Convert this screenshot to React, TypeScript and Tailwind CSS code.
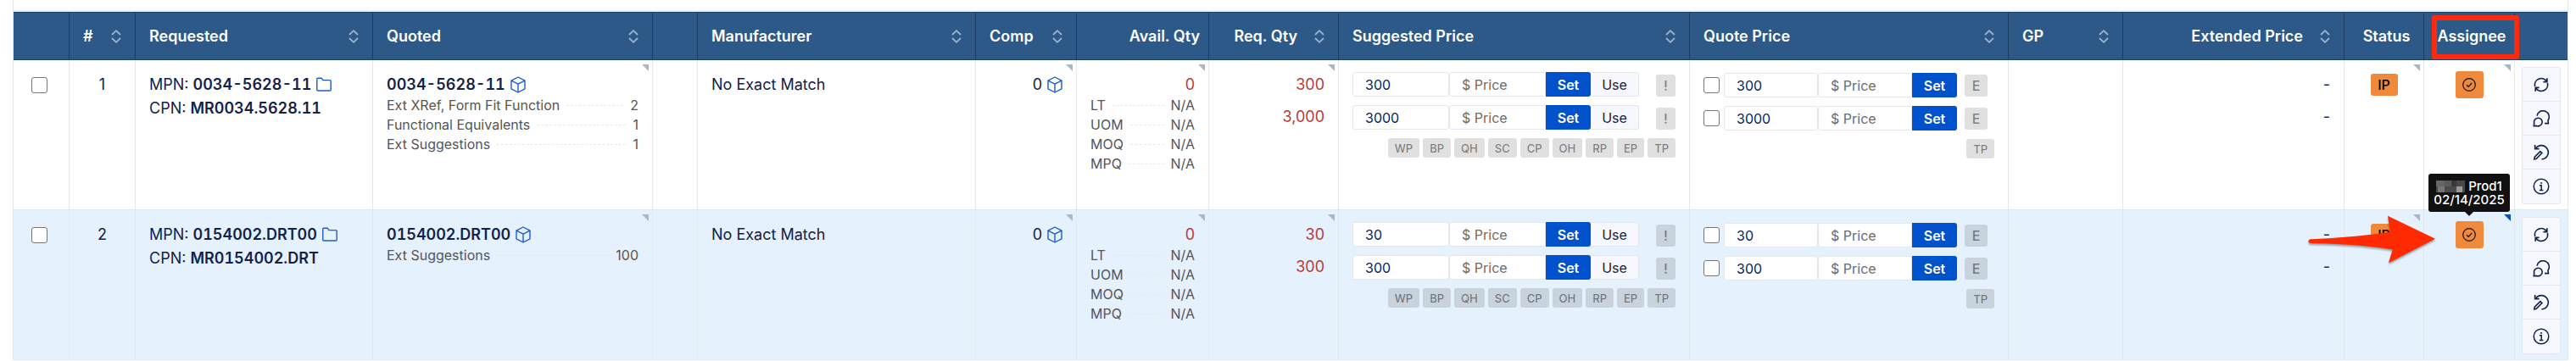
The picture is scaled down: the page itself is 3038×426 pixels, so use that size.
import React from 'react';
import clsx from 'clsx';

type Note = { label: string; value: string };

interface QuoteLine {
  id: number;
  mpn: string;
  cpn: string;
  matches: Note[];
  quantities: { value: string; label: string }[];
  hovered: boolean;
}

const lines: QuoteLine[] = [
  {
    id: 1,
    mpn: '0034-5628-11',
    cpn: 'MR0034.5628.11',
    matches: [
      { label: 'Ext XRef, Form Fit Function', value: '2' },
      { label: 'Functional Equivalents', value: '1' },
      { label: 'Ext Suggestions', value: '1' },
    ],
    quantities: [
      { value: '300', label: '300' },
      { value: '3000', label: '3,000' },
    ],
    hovered: false,
  },
  {
    id: 2,
    mpn: '0154002.DRT00',
    cpn: 'MR0154002.DRT',
    matches: [{ label: 'Ext Suggestions', value: '100' }],
    quantities: [
      { value: '30', label: '30' },
      { value: '300', label: '300' },
    ],
    hovered: true,
  },
];

const availability: Note[] = [
  { label: 'LT', value: 'N/A' },
  { label: 'UOM', value: 'N/A' },
  { label: 'MOQ', value: 'N/A' },
  { label: 'MPQ', value: 'N/A' },
];

const sources = ['WP', 'BP', 'QH', 'SC', 'CP', 'OH', 'RP', 'EP', 'TP'];

const SortIcon = () => (
  <svg viewBox="0 0 12 16" className="h-4 w-3 shrink-0" fill="none" stroke="#9db3ca" strokeWidth="1.8">
    <path d="M1 6l5-4.8L11 6M1 10l5 4.8L11 10" />
  </svg>
);

const FolderIcon = () => (
  <svg viewBox="0 0 18 18" className="size-[18px]" fill="none" stroke="#1d5bd0" strokeWidth="1.4" strokeLinejoin="round">
    <path d="M.8 2.2Q.8 1.2 1.8 1.2H6.2L8 3.6h8.2q1 0 1 1V15q0 1-1 1H1.8q-1 0-1-1z" />
  </svg>
);

const CubeIcon = () => (
  <svg viewBox="0 0 18 20" className="h-5 w-[18px]" fill="none" stroke="#1d5bd0" strokeWidth="1.4" strokeLinejoin="round">
    <path d="M9 1l8 4.2v9.6L9 19l-8-4.2V5.2z" />
    <path d="M1 5.2l8 4 8-4M9 9.2V19" />
  </svg>
);

const RefreshIcon = () => (
  <svg viewBox="0 0 20 20" className="size-5" fill="none" stroke="#12224a" strokeWidth="1.7">
    <path d="M2.6 12A7.6 7.6 0 0 1 16.2 5.8M17.4 8A7.6 7.6 0 0 1 3.8 14.2" />
    <path d="M16.8 2.2v4.4h-4.4M3.2 17.8v-4.4h4.4" />
  </svg>
);

const ChatIcon = () => (
  <svg viewBox="0 0 20 20" className="size-5" fill="none" stroke="#12224a" strokeWidth="1.6">
    <path d="M5 6.6A7.2 7.2 0 1 1 18 12l.4 3.6H14" />
    <path d="M1.3 18.7l.4-3.4A4.8 4.8 0 1 1 4.4 18.4z" />
  </svg>
);

const EditHistoryIcon = () => (
  <svg viewBox="0 0 20 20" className="size-5" fill="none" stroke="#12224a" strokeWidth="1.6">
    <path d="M3.6 4.8A8.2 8.2 0 1 1 10.4 18" />
    <path d="M2.6 1v4.6h5" />
    <path d="M1.8 18l.5-2.8 6.6-6.6 2 2-6.6 6.7z" />
  </svg>
);

const InfoIcon = () => (
  <svg viewBox="0 0 20 20" className="size-5" fill="none" stroke="#12224a" strokeWidth="1.5">
    <circle cx="10" cy="10" r="8.8" />
    <path d="M8 8.8h2.2v5.6M7.8 14.4h4.6" />
    <circle cx="10" cy="6" r="1" fill="#12224a" stroke="none" />
  </svg>
);

const actions = [
  { name: 'Refresh', Icon: RefreshIcon },
  { name: 'Comments', Icon: ChatIcon },
  { name: 'Edit history', Icon: EditHistoryIcon },
  { name: 'Info', Icon: InfoIcon },
];

const Corner = ({ active = false }: { active?: boolean }) => (
  <svg viewBox="0 0 8 8" className="absolute top-[5px] right-1 size-2">
    <path d="M0 0h8v8z" fill={active ? '#0052cc' : '#a9b8c6'} />
  </svg>
);

interface HeadProps {
  children?: React.ReactNode;
  sort?: boolean;
  className?: string;
}

const Head = ({ children, sort, className }: HeadProps) => (
  <th
    scope="col"
    className="relative h-[57px] border-y border-r border-[#1c3d66] bg-[#2d5989] p-0 text-lg font-semibold text-white last:border-r-0"
  >
    <div className={clsx('flex items-center pl-4', sort ? 'pr-4' : 'pr-[10px]', className)}>
      {children}
      {sort && <SortIcon />}
    </div>
  </th>
);

const Cell = ({ children, className }: { children?: React.ReactNode; className?: string }) => (
  <td className={clsx('relative border-r border-b border-[#e3e8ee] px-4 pt-[15px] pb-0 align-top last:border-r-0', className)}>
    {children}
  </td>
);

const NoteList = ({ items }: { items: Note[] }) => (
  <ul className="-mt-px text-base leading-[23px] text-[#555]">
    {items.map((item) => (
      <li key={item.label} className="flex items-center gap-2">
        <span>{item.label}</span>
        <span className="flex-1 border-t border-dashed border-[#e6e9ec]" />
        <span>{item.value}</span>
      </li>
    ))}
  </ul>
);

const Tag = ({ children, className }: { children: React.ReactNode; className?: string }) => (
  <span
    className={clsx(
      'flex shrink-0 items-center justify-center rounded-[3px] bg-black/12 font-medium text-black/45',
      className
    )}
  >
    {children}
  </span>
);

const partNumber = 'font-semibold tabular-nums';
const field =
  'h-[29px] w-0 min-w-0 flex-1 rounded-[3px] border border-[#e3e8ee] bg-white px-[14px] text-base text-[#12224a] placeholder:text-[#6b6b6b] outline-none';
const setButton = 'h-[29px] w-[53px] shrink-0 rounded-r-[3px] bg-[#0052cc] text-base font-semibold text-white';
const tick = 'size-[19px] shrink-0 appearance-none rounded-[3px] border border-[#767676] bg-white';

const SuggestedPrice = ({ line }: { line: QuoteLine }) => (
  <div className="-mt-px flex flex-col gap-[10px]">
    {line.quantities.map((qty) => (
      <div key={qty.value} className="flex items-end gap-5">
        <div className="flex min-w-0 flex-1">
          <input aria-label="Suggested quantity" defaultValue={qty.value} className={field} />
          <input aria-label="Suggested price" placeholder="$ Price" className={field} />
          <button className={setButton}>Set</button>
          <button className="h-[29px] w-[57px] shrink-0 rounded-r-[3px] border border-l-0 border-[#e3e8ee] bg-[#f6f8fe] text-base text-[#12224a]">
            Use
          </button>
        </div>
        <Tag className="h-[26px] w-[23px] text-base">!</Tag>
      </div>
    ))}
    <div className="flex justify-end gap-1">
      {sources.map((source) => (
        <Tag key={source} className="h-[23px] px-2 text-[13px]">
          {source}
        </Tag>
      ))}
    </div>
  </div>
);

const QuotePrice = ({ line }: { line: QuoteLine }) => (
  <div className="flex flex-col gap-[10px]">
    {line.quantities.map((qty) => (
      <div key={qty.value} className="flex items-center pr-2">
        <input type="checkbox" aria-label={`Quote quantity ${qty.label}`} className={tick} />
        <div className="ml-[5px] flex min-w-0 flex-1">
          <input aria-label="Quote quantity" defaultValue={qty.value} className={field} />
          <input aria-label="Quote price" placeholder="$ Price" className={field} />
          <button className={setButton}>Set</button>
        </div>
        <Tag className="ml-[9px] h-[26px] w-[27px] text-base">E</Tag>
      </div>
    ))}
    <div className="flex justify-end">
      <Tag className="h-[23px] px-2 text-[13px]">TP</Tag>
    </div>
  </div>
);

// Redacted first name in the tooltip
const MaskedName = () => (
  <svg viewBox="0 0 34 14" className="h-[14px] w-[34px]">
    <rect width="34" height="14" fill="#4a4a4a" />
    <rect width="10" height="7" fill="#666" />
    <rect x="10" width="8" height="7" fill="#5a5a5a" />
    <rect x="24" y="7" width="7" height="7" fill="#9a9a9a" />
    <rect x="2" y="7" width="8" height="7" fill="#757575" />
    <rect x="18" y="0" width="6" height="7" fill="#3a3a3a" />
  </svg>
);

const AssigneeTooltip = () => (
  <div
    role="tooltip"
    className="absolute bottom-[174px] left-1/2 z-20 flex h-[45px] w-24 -translate-x-1/2 flex-col items-center justify-center rounded-[3px] bg-[#111] text-[15px] leading-4 font-medium text-white"
  >
    <span className="flex items-center gap-1">
      <MaskedName />
      Prod1
    </span>
    <span>02/14/2025</span>
    <svg viewBox="0 0 10 5" className="absolute top-full h-[5px] w-[10px]">
      <path d="M0 0h10L5 5z" fill="#111" />
    </svg>
  </div>
);

const PointerArrow = () => (
  <svg
    viewBox="0 0 152 60"
    className="absolute top-[6px] -left-[43px] z-20 h-[60px] w-[152px] overflow-visible drop-shadow-[0_2px_1px_rgba(0,0,0,0.35)]"
  >
    <path
      d="M3 28.3Q60 26 96.7 19.4L94 .7 150 27.7 95 56.3l4.7-15.8Q60 34 3 33Q.3 32.6.3 30.7T3 28.3z"
      fill="#ff2a00"
    />
  </svg>
);

const Row = ({ line }: { line: QuoteLine }) => (
  <tr className={clsx('h-[177px] leading-7', line.hovered ? 'bg-[#e5f1fd]' : 'bg-white')}>
    <Cell>
      <input type="checkbox" aria-label={`Select line ${line.id}`} className={clsx(tick, 'mt-[5px] ml-[5px] block')} />
    </Cell>
    <Cell className="text-center">{line.id}</Cell>
    <Cell>
      <div className="flex items-center gap-[6px]">
        <span>
          MPN: <b className={partNumber}>{line.mpn}</b>
        </span>
        <FolderIcon />
      </div>
      <div>
        CPN: <b className={partNumber}>{line.cpn}</b>
      </div>
    </Cell>
    <Cell>
      <div className="flex items-center gap-[6px]">
        <b className={partNumber}>{line.mpn}</b>
        <CubeIcon />
      </div>
      <NoteList items={line.matches} />
      <Corner />
    </Cell>
    <Cell />
    <Cell>No Exact Match</Cell>
    <Cell>
      <div className="flex items-center justify-end gap-[6px]">
        0 <CubeIcon />
      </div>
      <Corner />
    </Cell>
    <Cell>
      <div className="text-right text-[#b73b3b]">0</div>
      <NoteList items={availability} />
      <Corner />
    </Cell>
    <Cell className="text-right text-[#b73b3b]">
      <div className="flex flex-col gap-[10px]">
        {line.quantities.map((qty) => (
          <span key={qty.label}>{qty.label}</span>
        ))}
      </div>
      <Corner />
    </Cell>
    <Cell>
      <SuggestedPrice line={line} />
    </Cell>
    <Cell>
      <QuotePrice line={line} />
    </Cell>
    <Cell />
    <Cell className="text-right">
      <div className="flex flex-col gap-[10px]">
        {line.quantities.map((qty) => (
          <span key={qty.label}>-</span>
        ))}
      </div>
    </Cell>
    <Cell>
      <span className="mx-auto mt-px flex h-[26px] w-8 items-center justify-center rounded-[3px] bg-[#ef8a3d] text-base font-medium text-black">
        IP
      </span>
      <Corner />
      {line.hovered && <PointerArrow />}
    </Cell>
    <Cell>
      <button
        aria-label="Assignee"
        className="mx-auto -mt-[2px] flex h-8 w-[33px] items-center justify-center rounded-[3px] bg-[#ef8a3d]"
      >
        <svg viewBox="0 0 16 16" className="size-4" fill="none" stroke="#111" strokeWidth="1.2">
          <circle cx="8" cy="8" r="7.3" />
          <path d="M5 8.2l2.2 2.1L11.2 6" />
        </svg>
      </button>
      <Corner active={line.hovered} />
      {line.hovered && <AssigneeTooltip />}
    </Cell>
    <td className="border-b border-[#e3e8ee] px-2 pt-2 align-top">
      <div className="flex flex-col divide-y divide-[#e3e8ee] rounded-[3px] border border-[#e3e8ee] bg-[#f6f8fe]">
        {actions.map(({ name, Icon }) => (
          <button key={name} aria-label={name} className="flex h-10 items-center justify-center">
            <Icon />
          </button>
        ))}
      </div>
    </td>
  </tr>
);

const App: React.FC = () => {
  return (
    <main className="bg-white font-[Inter,sans-serif] text-lg text-[#12224a]">
      <div className="mr-[9px] ml-[15px] border-x border-[#e3e8ee] pt-3">
        <div className="border-t-2 border-[#e6edf5]">
          <table className="w-full table-fixed border-separate border-spacing-0">
            <colgroup>
              <col className="w-[66px]" />
              <col className="w-[78px]" />
              <col className="w-[280px]" />
              <col className="w-[330px]" />
              <col className="w-[53px]" />
              <col className="w-[328px]" />
              <col className="w-[119px]" />
              <col className="w-[156px]" />
              <col className="w-[153px]" />
              <col className="w-[414px]" />
              <col className="w-[376px]" />
              <col className="w-[135px]" />
              <col className="w-[261px]" />
              <col className="w-[94px]" />
              <col className="w-[107px]" />
              <col className="w-[62px]" />
            </colgroup>
            <thead>
              <tr>
                <Head />
                <Head sort className="justify-between">#</Head>
                <Head sort className="justify-between">Requested</Head>
                <Head sort className="justify-between">Quoted</Head>
                <Head />
                <Head sort className="justify-between">Manufacturer</Head>
                <Head sort className="justify-between">Comp</Head>
                <Head className="justify-end">Avail. Qty</Head>
                <Head sort className="justify-end gap-5">Req. Qty</Head>
                <Head sort className="justify-between">Suggested Price</Head>
                <Head sort className="justify-between">Quote Price</Head>
                <Head sort className="justify-between">GP</Head>
                <Head sort className="justify-end gap-5">Extended Price</Head>
                <Head className="justify-center">Status</Head>
                <Head className="justify-center">
                  Assignee
                  <span className="absolute top-[3px] -right-[6px] bottom-0 left-[9px] z-20 rounded-[3px] border-6 border-[#ff2a0d]" />
                </Head>
                <Head />
              </tr>
            </thead>
            <tbody>
              {lines.map((line) => (
                <Row key={line.id} line={line} />
              ))}
            </tbody>
          </table>
        </div>
      </div>
    </main>
  );
};

export default App;
